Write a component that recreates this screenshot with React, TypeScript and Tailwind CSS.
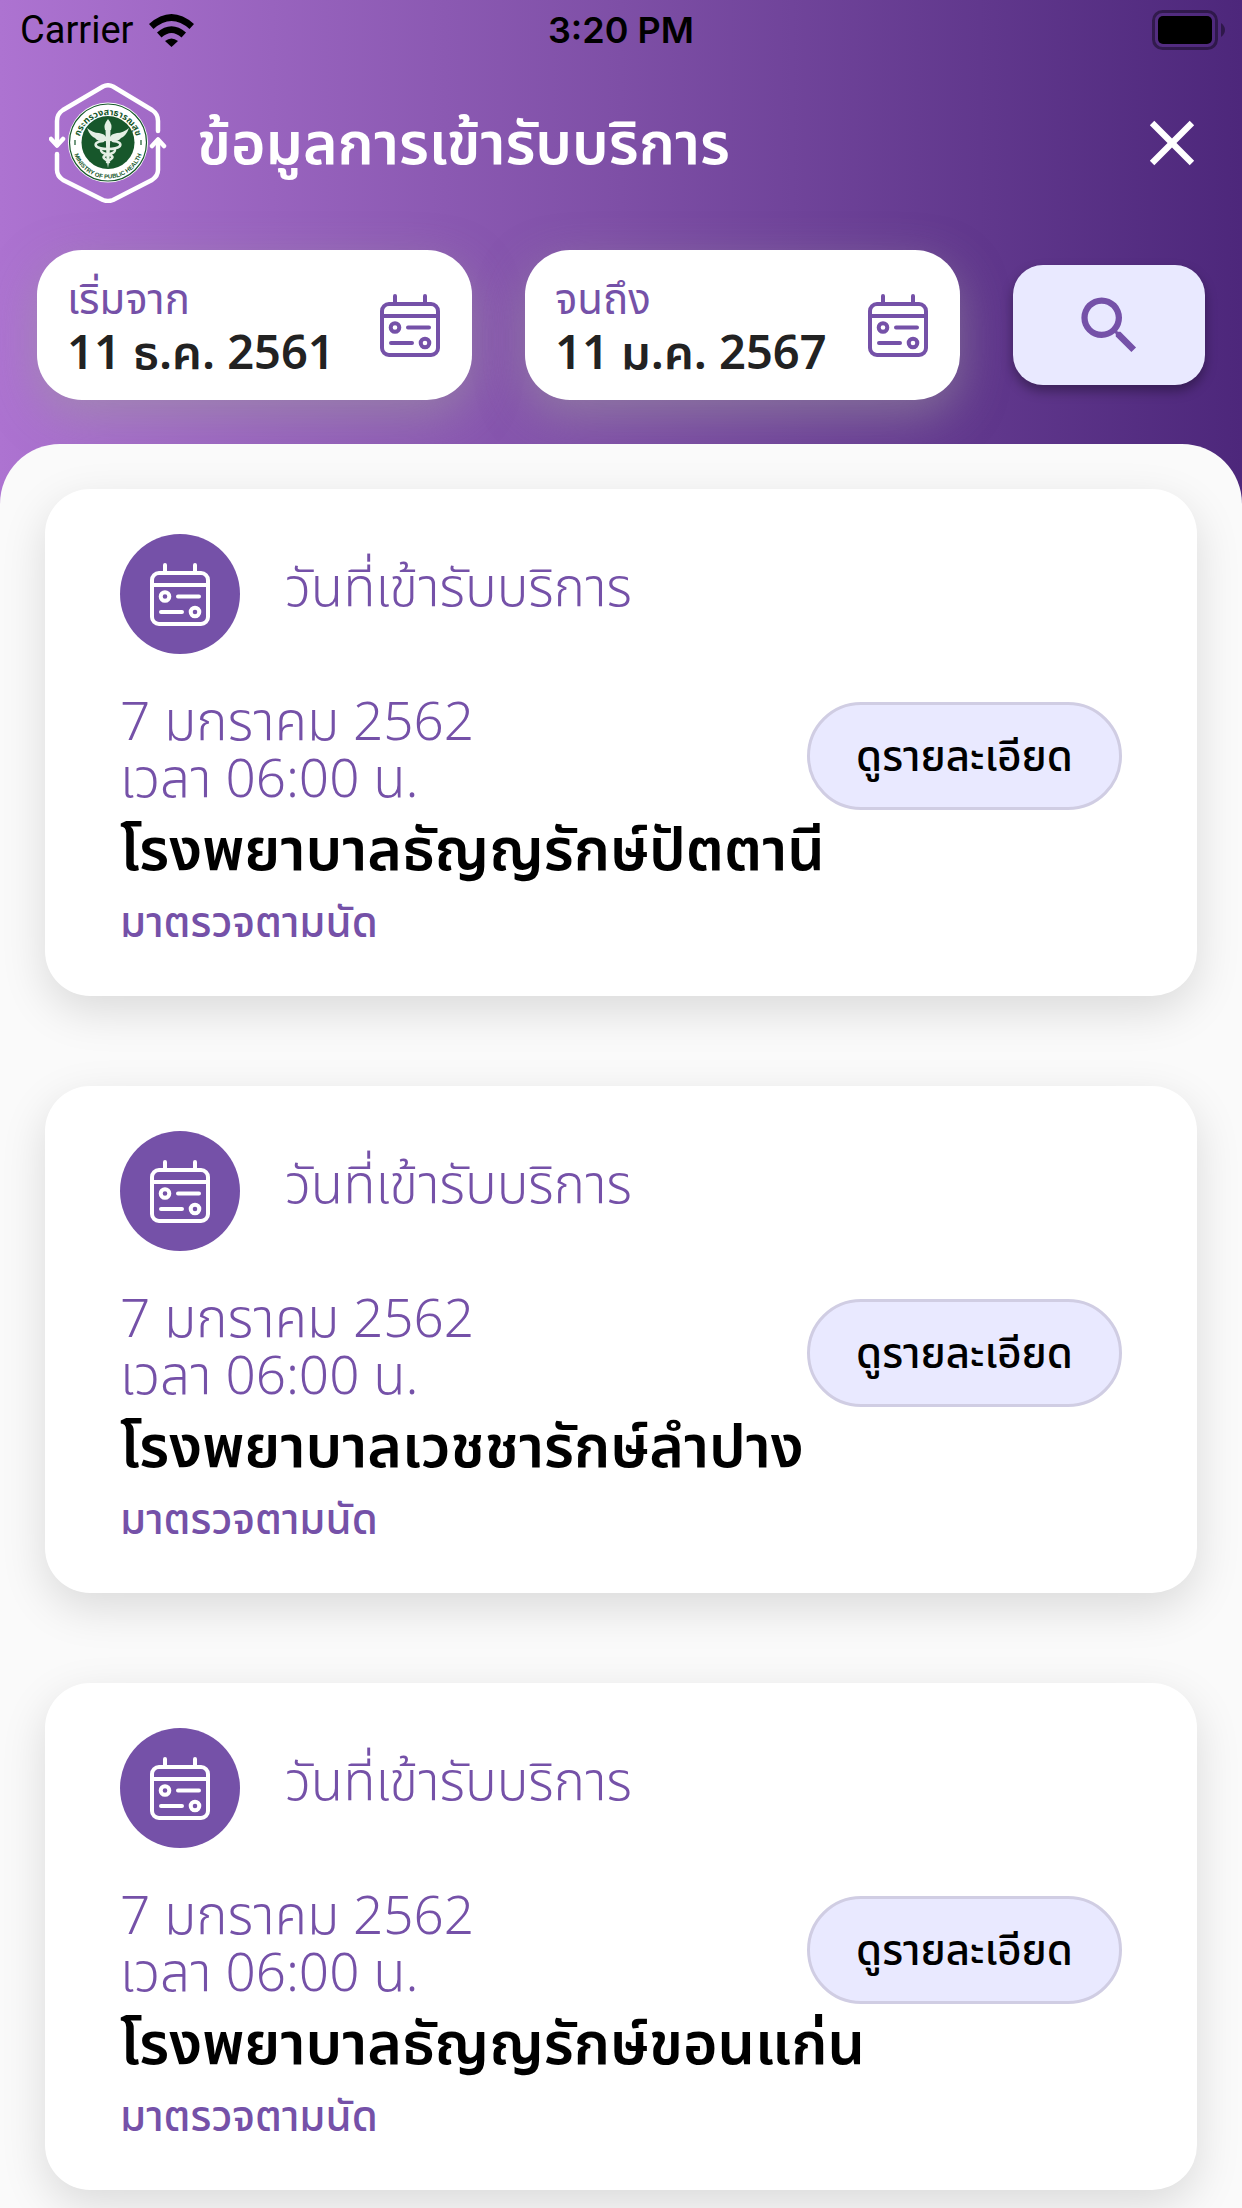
import { MdClose, MdSearch } from 'react-icons/md';

const visits = [
  {
    id: 1,
    date: '7 มกราคม 2562',
    time: 'เวลา 06:00 น.',
    hospital: 'โรงพยาบาลธัญญรักษ์ปัตตานี',
    reason: 'มาตรวจตามนัด',
  },
  {
    id: 2,
    date: '7 มกราคม 2562',
    time: 'เวลา 06:00 น.',
    hospital: 'โรงพยาบาลเวชชารักษ์ลำปาง',
    reason: 'มาตรวจตามนัด',
  },
  {
    id: 3,
    date: '7 มกราคม 2562',
    time: 'เวลา 06:00 น.',
    hospital: 'โรงพยาบาลธัญญรักษ์ขอนแก่น',
    reason: 'มาตรวจตามนัด',
  },
];

function CalendarIcon() {
  return (
    <svg
      viewBox="0 0 60 63"
      className="w-[60px] h-[63px] shrink-0"
      fill="none"
      stroke="currentColor"
      strokeWidth="4"
      strokeLinecap="round"
      aria-hidden="true"
    >
      <rect x="2" y="10" width="56" height="51" rx="7" />
      <path d="M15 2v8M45 2v8M2 22h56M28 33.500h21M11 49h21" />
      <circle cx="15" cy="33.500" r="4.300" />
      <circle cx="45" cy="49" r="4.300" />
    </svg>
  );
}

function MinistryLogo() {
  return (
    <svg viewBox="0 0 118 120" className="w-[118px] h-[120px] shrink-0" role="img" aria-label="Ministry of Public Health">
      <g fill="none" stroke="#fff" strokeWidth="4.500" strokeLinecap="round" strokeLinejoin="round">
        <path d="M8 62V38Q8 31 14 27L54 3.500Q59 1 64 3.500L103 27Q109 31 109 38V48" />
        <path d="M2 56L8 62.500L14 56" />
        <path d="M8 71V87Q8 93 14 97L54 117Q59 119 64 117L103 97Q109 93 109 87V57" />
        <path d="M103 63L109 56.500L115 63" />
      </g>
      <circle cx="59" cy="59.500" r="40" fill="#fff" />
      <circle cx="59" cy="59.500" r="38.500" fill="none" stroke="#17572b" strokeWidth="1.200" />
      <circle cx="59" cy="59.500" r="26.500" fill="#17572b" />
      <defs>
        <path id="arc-top" d="M30 61A29 29 0 0 1 88 61" />
        <path id="arc-bottom" d="M24 66A35.500 35.500 0 0 0 94 66" />
      </defs>
      <text fill="#17572b" fontSize="9" fontWeight="700" textAnchor="middle">
        <textPath href="#arc-top" startOffset="50%">กระทรวงสาธารณสุข</textPath>
      </text>
      <text fill="#17572b" fontSize="6" fontWeight="700" fontFamily="Liberation Sans" textAnchor="middle">
        <textPath href="#arc-bottom" startOffset="50%">MINISTRY OF PUBLIC HEALTH</textPath>
      </text>
      <path d="M26 57v5M92 57v5" stroke="#17572b" strokeWidth="1.200" />
      {/* winged staff with the two snakes */}
      <g fill="#e4efe4">
        <path d="M59 36q5 6 3 11h-6q-2-5 3-11z" />
        <path d="M56.500 47h5l-1 29-1.500 9-1.500-9z" />
        <path d="M57 58q-8 1-11-3-5-2-8-10 6 5 12 5 6 1 7 4z" />
        <path d="M61 58q8 1 11-3 5-2 8-10-6 5-12 5-6 1-7 4z" />
      </g>
      <g fill="none" stroke="#e4efe4" strokeWidth="2.500" strokeLinecap="round">
        <path d="M54 58q-9 1-7 5 3 3 12 3t12-3q2-4-7-5" />
        <path d="M66 67q0 3-7 4.500t-3 4.500l4 3M52 67q0 3 7 4.500t3 4.500l-4 3" />
      </g>
    </svg>
  );
}

function StatusBar() {
  return (
    <div className="grid grid-cols-3 items-center h-[60px] px-5 text-black font-[Inter,'Liberation_Sans',sans-serif] text-[36px] leading-none">
      <div className="flex items-center gap-4">
        <span className="font-[Roboto,sans-serif] text-[38px]">Carrier</span>
        <svg viewBox="0 0 45 33" className="w-[45px] h-[33px]" aria-hidden="true">
          <path d="M0 10Q22.500-10 45 10L40.500 15Q22.500-1 4.500 15z" />
          <path d="M8 18.500Q22.500 6 37 18.500L32.500 23.500Q22.500 14.500 12.500 23.500z" />
          <path d="M16 27Q22.500 22 29 27L22.500 33z" />
        </svg>
      </div>
      <span className="text-center font-semibold whitespace-nowrap">3:20 PM</span>
      <svg viewBox="0 0 74 40" className="w-[74px] h-10 -mr-1 justify-self-end" aria-hidden="true">
        <rect x="1.500" y="1.500" width="63" height="37" rx="9" fill="none" stroke="#000" strokeOpacity=".4" strokeWidth="3" />
        <rect x="6" y="6" width="54" height="28" rx="5" />
        <path d="M69 13q4 3 4 7t-4 7z" fillOpacity=".4" />
      </svg>
    </div>
  );
}

function DateField({ label, value }: { label: string; value: string }) {
  return (
    <button
      type="button"
      className="flex flex-1 items-center justify-between h-[150px] pl-[30px] pr-8 rounded-[45px] bg-white text-left text-[#7551a8] shadow-[0_15px_45px_rgba(158,158,158,0.5)]"
    >
      <span className="flex flex-col pt-1.5 whitespace-nowrap">
        <span className="text-[42px] leading-[54px]">{label}</span>
        <span className="text-[47px] leading-[54px] font-semibold text-[#222]">{value}</span>
      </span>
      <CalendarIcon />
    </button>
  );
}

function VisitCard({ visit }: { visit: (typeof visits)[number] }) {
  return (
    <article className="h-[507px] px-[75px] pt-[45px] rounded-[45px] bg-white text-[#7551a8] shadow-[0_15px_45px_rgba(0,0,0,0.13)]">
      <div className="flex items-center gap-[45px]">
        <span className="flex items-center justify-center size-[120px] rounded-full bg-[#7551a8] text-white">
          <CalendarIcon />
        </span>
        <h2 className="pb-2 text-[53px] leading-[60px] font-light">วันที่เข้ารับบริการ</h2>
      </div>
      <div className="flex items-start justify-between pt-[42px]">
        <p className="text-[53px] leading-[57px] font-light whitespace-nowrap">
          {visit.date}
          <br />
          {visit.time}
        </p>
        <button
          type="button"
          className="mt-1.5 w-[315px] h-[108px] pt-1 rounded-full border-[3px] border-[#d0cde3] bg-[#e9e9ff] text-[42px] font-medium text-black"
        >
          ดูรายละเอียด
        </button>
      </div>
      <h3 className="text-[59px] leading-[84px] font-semibold text-black whitespace-nowrap">{visit.hospital}</h3>
      <p className="text-[42px] leading-[60px] font-medium">{visit.reason}</p>
    </article>
  );
}

export default function App() {
  return (
    <div
      lang="th"
      className="min-h-screen flex flex-col bg-linear-to-r from-[#ad73d1] via-[#7e4fa6] to-[#4d277b] font-['Noto_Sans_Thai','Noto_Sans',sans-serif]"
    >
      <StatusBar />
      <header>
        <div className="flex items-center h-[166px] pl-[49px] pr-8">
          <MinistryLogo />
          <h1 className="flex-1 pl-[30px] pt-1.5 text-[59px] leading-[82px] font-semibold text-white whitespace-nowrap">
            ข้อมูลการเข้ารับบริการ
          </h1>
          <button type="button" aria-label="ปิด" className="text-white">
            <MdClose className="size-[76px]" />
          </button>
        </div>
        <div className="flex items-center gap-[53px] px-[37px] pt-6 pb-11">
          <DateField label="เริ่มจาก" value="11 ธ.ค. 2561" />
          <DateField label="จนถึง" value="11 ม.ค. 2567" />
          <button
            type="button"
            aria-label="ค้นหา"
            className="flex items-center justify-center w-48 h-[120px] rounded-[30px] bg-[#e9e9ff] text-[#7551a8] shadow-[0_6px_12px_rgba(0,0,0,0.35)]"
          >
            <MdSearch className="size-[75px]" />
          </button>
        </div>
      </header>
      <main className="flex-1 flex flex-col gap-[90px] px-[45px] pt-[45px] pb-4 rounded-t-[60px] bg-[#fafafa] overflow-hidden">
        {visits.map((visit) => (
          <VisitCard key={visit.id} visit={visit} />
        ))}
      </main>
    </div>
  );
}
